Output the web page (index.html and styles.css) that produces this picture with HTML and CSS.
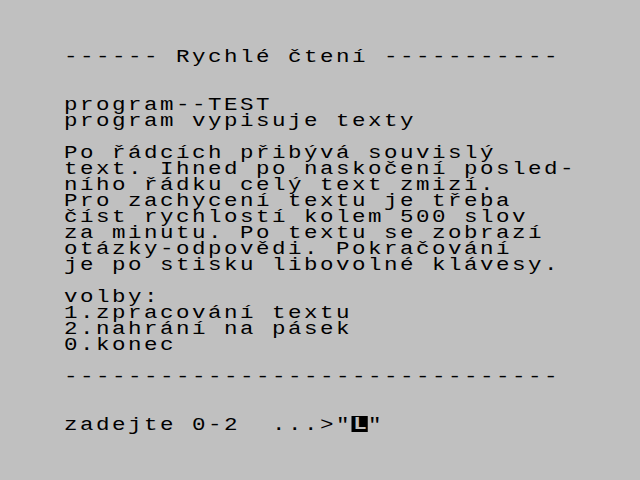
FILE: index.html
```html
<!DOCTYPE html>
<html>
<head>
<meta charset="utf-8">
<link rel="stylesheet" href="styles.css">
</head>
<body>
<div class="screen">
<div class="line">------ Rychlé čtení -----------</div>
<div class="line"> </div>
<div class="line"> </div>
<div class="line">program--TEST</div>
<div class="line">program vypisuje texty</div>
<div class="line"> </div>
<div class="line">Po řádcích přibývá souvislý</div>
<div class="line">text. Ihned po naskočení posled-</div>
<div class="line">ního řádku celý text zmizí.</div>
<div class="line">Pro zachycení textu je třeba</div>
<div class="line">číst rychlostí kolem 500 slov</div>
<div class="line">za minutu. Po textu se zobrazí</div>
<div class="line">otázky-odpovědi. Pokračování</div>
<div class="line">je po stisku libovolné klávesy.</div>
<div class="line"> </div>
<div class="line">volby:</div>
<div class="line">1.zpracování textu</div>
<div class="line">2.nahrání na pásek</div>
<div class="line">0.konec</div>
<div class="line"> </div>
<div class="line">-------------------------------</div>
<div class="line"> </div>
<div class="line"> </div>
<div class="line">zadejte 0-2  ...&gt;"<span class="cursor">L</span>"</div>
</div>
</body>
</html>
```
FILE: styles.css
```css
html, body {
  margin: 0;
  padding: 0;
  background: #c0c0c0;
}
body {
  width: 640px;
  height: 480px;
  overflow: hidden;
}
.screen {
  margin: 49px 64px 0 64px;
  width: 512px;
  height: 384px;
  color: #000;
  font-family: "Liberation Mono", monospace;
  font-size: 18px;
  letter-spacing: 2px;
}
.line {
  width: 409.6px;
  height: 16px;
  line-height: 16px;
  white-space: pre;
  transform: scaleX(1.25);
  transform-origin: 0 0;
}
.cursor {
  display: inline-block;
  width: 12.8px;
  height: 16px;
  background: #000;
  color: #c0c0c0;
  letter-spacing: 0;
  text-align: center;
  vertical-align: top;
  font-weight: bold;
  margin-top: -1px;
}
```
